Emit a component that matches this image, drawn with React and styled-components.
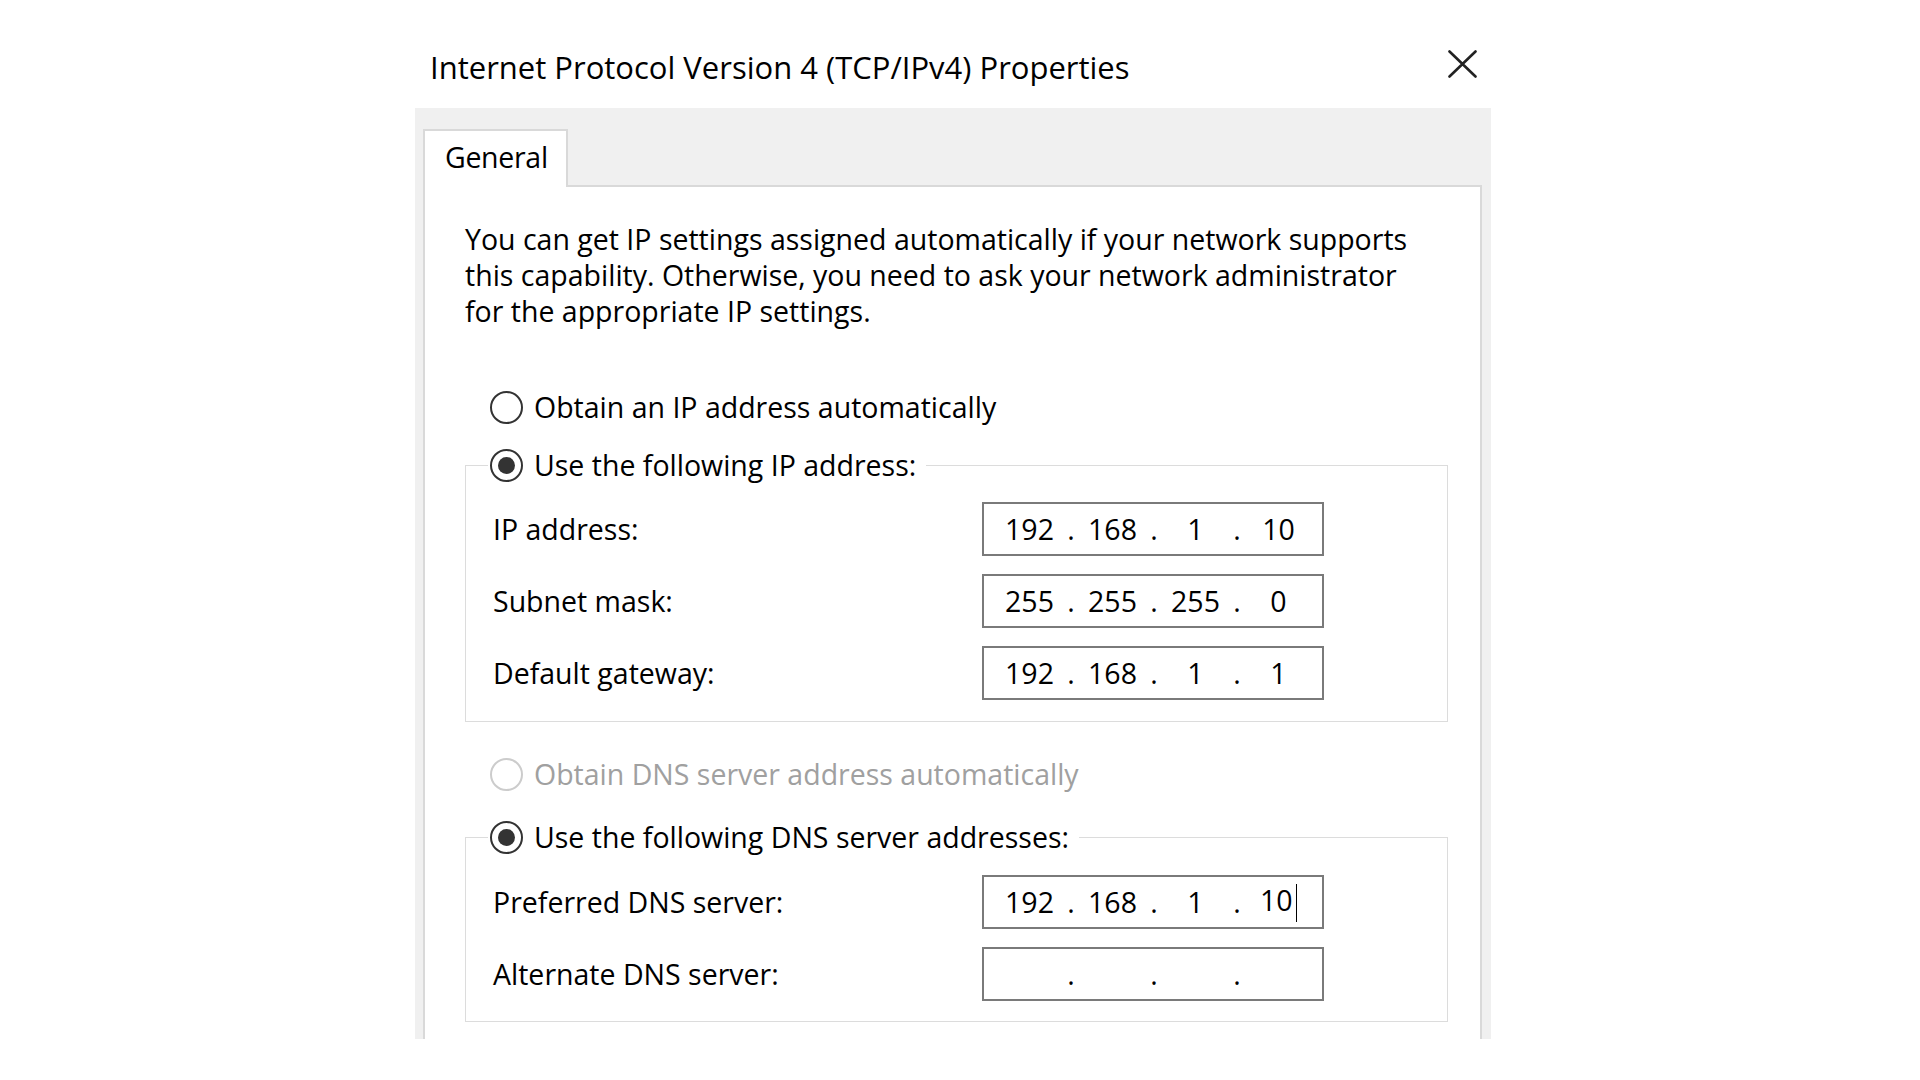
import styled, { createGlobalStyle } from 'styled-components';

const GlobalStyle = createGlobalStyle`
  html, body {
    margin: 0;
    padding: 0;
    background: #ffffff;
  }
  body {
    font-family: "Open Sans", "Noto Sans", sans-serif;
    font-size: 28.5px;
    line-height: 36px;
    color: #000000;
  }
`;

const Page = styled.div`
  padding-left: 415px;
  width: 1076px;
`;

const TitleBar = styled.div`
  height: 108px;
  box-sizing: border-box;
  padding: 49px 14px 0 15px;
  display: flex;
  justify-content: space-between;
  align-items: flex-start;
`;

const Title = styled.div`
  font-size: 31px;
  line-height: 36px;
`;

const CloseButton = styled.div`
  width: 29px;
  height: 28px;
  margin-top: 1px;
  display: flex;
`;

const Panel = styled.div`
  height: 931px;
  box-sizing: border-box;
  background: #f0f0f0;
  overflow: hidden;
  padding: 21px 9px 0 8px;
`;

const TabStrip = styled.div`
  display: flex;
`;

const Tab = styled.div`
  width: 145px;
  height: 58px;
  box-sizing: border-box;
  border: 2px solid #d9d9d9;
  border-bottom: none;
  background: #ffffff;
  padding: 8px 0 0 20px;
  margin-bottom: -2px;
  position: relative;
  z-index: 1;
  letter-spacing: -0.3px;
`;

const Content = styled.div`
  border: 2px solid #d9d9d9;
  background: #ffffff;
  padding: 34px 0 60px 40px;
  min-height: 1000px;
`;

const Intro = styled.p`
  margin: 0;
  line-height: 36px;
`;

const RadioRow = styled.div`
  display: flex;
  align-items: center;
  gap: 11px;
  height: 36px;
  padding-left: ${p => p.indent || 0}px;
  margin-top: ${p => p.top || 0}px;
  color: ${p => (p.disabled ? '#a0a0a0' : '#000000')};
`;

const RadioCircle = styled.span`
  width: 33px;
  height: 33px;
  box-sizing: border-box;
  border-radius: 50%;
  border: 2.5px solid ${p => (p.disabled ? '#cccccc' : '#333333')};
  background: #ffffff;
  display: flex;
  align-items: center;
  justify-content: center;
  flex-shrink: 0;
`;

const RadioDot = styled.span`
  width: 17px;
  height: 17px;
  border-radius: 50%;
  background: #333333;
`;

const Group = styled.div`
  border: 1px solid #dcdcdc;
  margin: ${p => p.top}px 32px 0 0;
`;

const Legend = styled(RadioRow)`
  width: fit-content;
  margin: -19px 0 0 22px;
  padding: 0 10px 0 2px;
  background: #ffffff;
`;

const Rows = styled.div`
  display: flex;
  flex-direction: column;
  gap: 18px;
  padding: ${p => p.top}px 0 ${p => p.bottom}px 27px;
`;

const Row = styled.div`
  display: flex;
  align-items: center;
  height: 54px;
`;

const Label = styled.div`
  width: 489px;
`;

const IpBox = styled.div`
  width: 342px;
  height: 54px;
  box-sizing: border-box;
  border: 2px solid #7a7a7a;
  background: #ffffff;
  display: flex;
  align-items: center;
  padding-left: 8px;
`;

const Octet = styled.span`
  width: 75px;
  text-align: center;
  white-space: nowrap;
`;

const Dot = styled.span`
  width: 8px;
  text-align: center;
`;

const Caret = styled.span`
  display: inline-block;
  width: 1.5px;
  height: 38px;
  background: #000000;
  vertical-align: middle;
  margin-left: 3px;
`;

function Radio({ checked, disabled }) {
  return (
    <RadioCircle disabled={disabled}>{checked && <RadioDot />}</RadioCircle>
  );
}

function IpField({ value, caret }) {
  const parts = value ? value.split('.') : ['', '', '', ''];
  return (
    <IpBox>
      {parts.flatMap((part, index) => [
        index > 0 ? <Dot key={'d' + index}>.</Dot> : null,
        <Octet key={'o' + index}>
          {part}
          {caret && index === 3 && <Caret />}
        </Octet>,
      ])}
    </IpBox>
  );
}

const ipRows = [
  { label: 'IP address:', value: '192.168.1.10' },
  { label: 'Subnet mask:', value: '255.255.255.0' },
  { label: 'Default gateway:', value: '192.168.1.1' },
];

const dnsRows = [
  { label: 'Preferred DNS server:', value: '192.168.1.10', caret: true },
  { label: 'Alternate DNS server:', value: '' },
];

function App() {
  return (
    <>
      <GlobalStyle />
      <Page>
        <TitleBar>
          <Title>Internet Protocol Version 4 (TCP/IPv4) Properties</Title>
          <CloseButton>
            <svg width="29" height="28" viewBox="0 0 29 28">
              <path d="M1.5 1.5 L27.5 26.5 M27.5 1.5 L1.5 26.5" stroke="#222222" strokeWidth="2.6" strokeLinecap="round" />
            </svg>
          </CloseButton>
        </TitleBar>
        <Panel>
          <TabStrip>
            <Tab>General</Tab>
          </TabStrip>
          <Content>
            <Intro>
              You can get IP settings assigned automatically if your network supports
              <br />
              this capability. Otherwise, you need to ask your network administrator
              <br />
              for the appropriate IP settings.
            </Intro>

            <RadioRow indent={25} top={60}>
              <Radio />
              Obtain an IP address automatically
            </RadioRow>

            <Group top={40}>
              <Legend>
                <Radio checked />
                Use the following IP address:
              </Legend>
              <Rows top={19} bottom={21}>
                {ipRows.map(row => (
                  <Row key={row.label}>
                    <Label>{row.label}</Label>
                    <IpField value={row.value} />
                  </Row>
                ))}
              </Rows>
            </Group>

            <RadioRow indent={25} top={34} disabled>
              <Radio disabled />
              Obtain DNS server address automatically
            </RadioRow>

            <Group top={45}>
              <Legend>
                <Radio checked />
                Use the following DNS server addresses:
              </Legend>
              <Rows top={20} bottom={20}>
                {dnsRows.map(row => (
                  <Row key={row.label}>
                    <Label>{row.label}</Label>
                    <IpField value={row.value} caret={row.caret} />
                  </Row>
                ))}
              </Rows>
            </Group>
          </Content>
        </Panel>
      </Page>
    </>
  );
}

export default App;
